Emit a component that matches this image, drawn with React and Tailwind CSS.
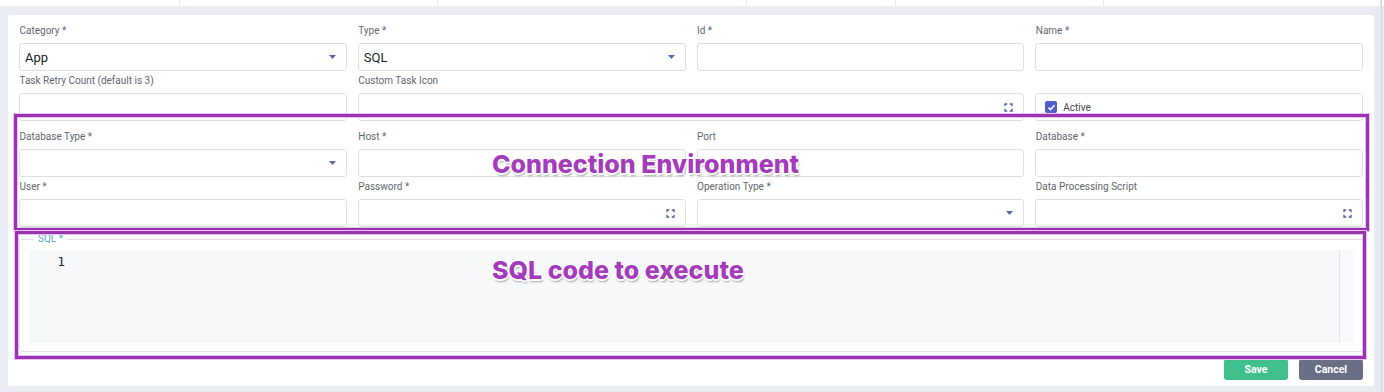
import React from "react";

const Expand = () => (
  <svg width="9" height="9" viewBox="0 0 9 9" fill="none" stroke="#4b5a9e" strokeWidth="1.3">
    <path d="M1 3.2V1h2.2M5.8 1H8v2.2M8 5.8V8H5.8M3.2 8H1V5.8" />
  </svg>
);

const Caret = () => (
  <svg width="7" height="4" viewBox="0 0 7 4">
    <path d="M0 0h7L3.5 4z" fill="#5565b0" />
  </svg>
);

const Label = ({ children }) => (
  <div className="text-[10px] leading-[12px] text-[#63666d] mb-[6px] pl-[0.5px]">{children}</div>
);

const Input = ({ children, className = "" }) => (
  <div
    className={`h-[28px] border border-[#dcdfe5] rounded-[3px] bg-white flex items-center ${className}`}
  >
    {children}
  </div>
);

const Field = ({ label, value, select, expand, span2 }) => (
  <div className={span2 ? "col-span-2" : ""}>
    <Label>{label}</Label>
    <Input className="pl-[5px] pr-[10px] justify-between">
      <span className="text-[13px] text-[#222] leading-none">{value || ""}</span>
      {select && <Caret />}
      {expand && <Expand />}
    </Input>
  </div>
);

const annot =
  "absolute text-[25px] font-extrabold text-[#a43bbb] whitespace-nowrap leading-none";
const annotShadow = {
  textShadow:
    "1.5px 0 0 #fff,-1.5px 0 0 #fff,0 1.5px 0 #fff,0 -1.5px 0 #fff,1px 1px 0 #fff,-1px -1px 0 #fff,1px -1px 0 #fff,-1px 1px 0 #fff,1px 2.5px 2px rgba(0,0,0,0.35)",
};

export default function App() {
  return (
    <div
      className="w-[1384px] h-[392px] bg-[#e8ecf2] relative overflow-hidden"
      style={{ fontFamily: "Roboto, 'Liberation Sans', sans-serif" }}
    >
      <div className="h-[6px] bg-white flex">
        <div className="w-[180px] border-r border-[#e3e6ea]" />
        <div className="w-[258px] border-r border-[#e3e6ea]" />
        <div className="w-[309px] border-r border-[#e3e6ea]" />
        <div className="w-[149px] border-r border-[#e3e6ea]" />
        <div className="w-[208px] border-r border-[#e3e6ea]" />
        <div className="w-[277px] border-r border-[#e3e6ea]" />
      </div>
      <div className="absolute right-[2px] top-0 bottom-0 w-[1px] bg-[#d3d7dd]" />

      <div className="pl-[8px] pt-[9px]">
        <div className="w-[1366px] bg-white rounded-[3px] px-[11px] pt-[10px] pb-[6px]">
          <div className="grid grid-cols-4 gap-x-[11px] gap-y-[4px]">
            <Field label="Category *" value="App" select />
            <Field label="Type *" value="SQL" select />
            <Field label="Id *" />
            <Field label="Name *" />
            <Field label="Task Retry Count (default is 3)" />
            <Field label="Custom Task Icon" expand span2 />
            <div>
              <div className="h-[18px]" />
              <Input className="pl-[9px] gap-[6px]">
                <div className="w-[12px] h-[12px] rounded-[2px] bg-[#4f5ecb] flex items-center justify-center">
                  <svg width="9" height="9" viewBox="0 0 9 9" fill="none" stroke="#fff" strokeWidth="1.5">
                    <path d="M1.5 4.6l2 2 4-4.4" />
                  </svg>
                </div>
                <span className="text-[10px] text-[#444]">Active</span>
              </Input>
            </div>
          </div>

          <div className="grid grid-cols-4 gap-x-[11px] gap-y-[4px] mt-[10px]">
            <Field label="Database Type *" select />
            <Field label="Host *" />
            <Field label="Port" />
            <Field label="Database *" />
            <Field label="User *" />
            <Field label="Password *" expand />
            <Field label="Operation Type *" select />
            <Field label="Data Processing Script" expand />
          </div>

          <fieldset className="mt-[6px] border border-[#dfe2e6] rounded-[3px] px-[9px] pb-[8px] pt-[5px]">
            <legend className="ml-[5px] px-[4px] text-[10px] leading-[12px] text-[#4fa6c9]">SQL *</legend>
            <div className="h-[93px] bg-[#f7f8fa] flex">
              <div className="w-[36px] text-right pt-[2px] text-[13px] text-[#1d2745]" style={{ fontFamily: "'DejaVu Sans Mono', monospace" }}>
                1
              </div>
              <div className="flex-1" />
              <div className="w-[14px] border-l border-[#e2e4e8] bg-[#f8f9fa]" />
            </div>
          </fieldset>

          <div className="flex justify-end gap-[11px] mt-[7px]">
            <button className="w-[64px] h-[21px] rounded-[3px] bg-[#3fbf8b] text-white text-[10.5px] font-bold">Save</button>
            <button className="w-[64px] h-[21px] rounded-[3px] bg-[#6b6f85] text-white text-[10.5px] font-bold">Cancel</button>
          </div>
        </div>
      </div>

      {/* annotation overlays */}
      <div className="absolute left-[14px] top-[114px] w-[1355px] h-[117px] border-[3px] border-[#9b33b1] shadow-[0_0_0_1px_#e6c3ee,inset_0_0_0_1px_#e6c3ee]" />
      <div className="absolute left-[15px] top-[231px] w-[1351px] h-[128px] border-[3px] border-[#9b33b1] shadow-[0_0_0_1px_#e6c3ee,inset_0_0_0_1px_#e6c3ee]" />
      <div className={annot + " left-[492px] top-[152px]"} style={{ ...annotShadow, fontFamily: "Inter, sans-serif" }}>
        Connection Environment
      </div>
      <div className={annot + " left-[492px] top-[258px]"} style={{ ...annotShadow, fontFamily: "Inter, sans-serif" }}>
        SQL code to execute
      </div>
    </div>
  );
}
